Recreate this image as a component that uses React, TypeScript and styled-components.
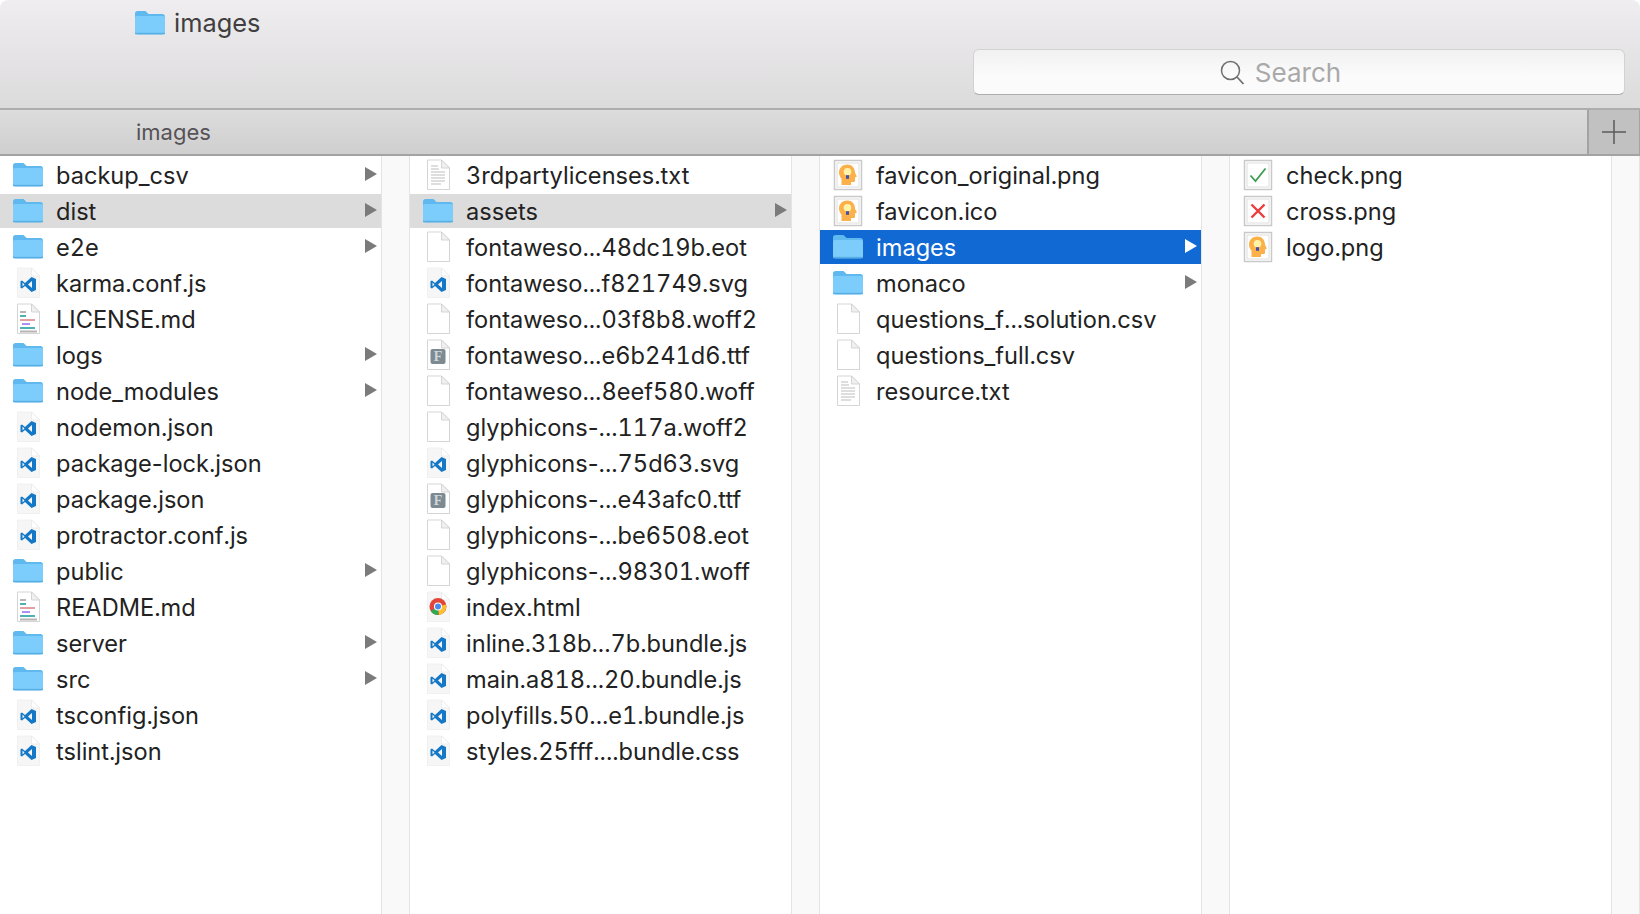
import React from 'react';
import styled, { createGlobalStyle } from 'styled-components';

type Kind = 'folder' | 'blank' | 'text' | 'md' | 'code' | 'font' | 'chrome' | 'logo' | 'check' | 'cross';

type Entry = {
  name: string;
  kind: Kind;
  state?: 'active' | 'path';
};

const GlobalStyle = createGlobalStyle`
  html, body {
    margin: 0;
    height: 100%;
    background: #fff;
    overflow: hidden;
  }
  #root {
    height: 100%;
  }
`;

const Window = styled.div`
  display: flex;
  flex-direction: column;
  height: 914px;
  font-family: Inter, Roboto, 'Liberation Sans', sans-serif;
  color: #222;
  overflow: hidden;
`;

const TitleBar = styled.header`
  height: 108px;
  box-sizing: border-box;
  padding: 9px 15px 13px 134px;
  display: flex;
  flex-direction: column;
  justify-content: space-between;
  background: linear-gradient(#efedef, #dcdbdc);
  border-radius: 8px 8px 0 0;
`;

const Title = styled.div`
  display: flex;
  align-items: center;
  gap: 8px;
  height: 26px;
  font-size: 25.400px;
  color: #403e40;
`;

const TitleIcon = styled.span`
  display: flex;
  margin-top: 2px;
`;

const SearchBox = styled.div`
  align-self: flex-end;
  width: 652px;
  height: 46px;
  box-sizing: border-box;
  display: flex;
  align-items: center;
  justify-content: center;
  gap: 10px;
  padding-right: 38px;
  font-size: 26px;
  color: #a9a9a9;
  background: linear-gradient(#f1f1f1, #fbfbfb 60%);
  border: 1px solid #d3d2d3;
  border-bottom-color: #aeadae;
  border-radius: 6px;
`;

const PathBar = styled.div`
  height: 48px;
  box-sizing: border-box;
  display: flex;
  align-items: center;
  justify-content: space-between;
  padding-left: 136px;
  font-size: 22px;
  color: #555355;
  background: linear-gradient(#dddcdd, #d0cfd0);
  border-top: 2px solid #aeadae;
  border-bottom: 2px solid #a4a3a4;
`;

const AddButton = styled.div`
  width: 53px;
  height: 100%;
  display: flex;
  align-items: center;
  justify-content: center;
  background: #c2c1c2;
  border-left: 2px solid #a4a3a4;
  border-right: 1px solid #a4a3a4;
  box-sizing: border-box;
`;

const Columns = styled.main`
  flex: 1;
  display: grid;
  grid-template-columns: repeat(4, 410px);
  background: #fff;
`;

const Column = styled.section`
  display: flex;
  min-width: 0;
`;

const List = styled.ul`
  flex: 1;
  list-style: none;
  margin: 0;
  padding: 2px 0 0;
  min-width: 0;
`;

const Gutter = styled.div`
  width: 27px;
  flex: none;
  background: #f9f9f9;
  border-left: 1px solid #e4e4e4;
  border-right: 1px solid #e4e4e4;
`;

const Row = styled.li<{ $state?: 'active' | 'path' }>`
  height: 34px;
  margin-bottom: 2px;
  display: flex;
  align-items: center;
  font-size: 23.600px;
  white-space: nowrap;
  background: ${(p) => (p.$state === 'active' ? '#1169d3' : p.$state === 'path' ? '#dcdcdc' : 'transparent')};
  color: ${(p) => (p.$state === 'active' ? '#fff' : '#222')};
`;

const IconSlot = styled.span`
  width: 56px;
  height: 34px;
  flex: none;
  display: flex;
  align-items: center;
  justify-content: center;
`;

const Name = styled.span`
  flex: 1;
  min-width: 0;
  font-variant-numeric: tabular-nums;
`;

// tabular figures also widen the hyphen in Inter
const Hyphen = styled.span`
  font-variant-numeric: normal;
`;

const Arrow = styled.span<{ $light: boolean }>`
  flex: none;
  width: 0;
  height: 0;
  margin: 0 4px 2px 0;
  border-top: 7px solid transparent;
  border-bottom: 7px solid transparent;
  border-left: 12px solid ${(p) => (p.$light ? '#fff' : '#7b7b7b')};
`;

const FolderIcon = () => (
  <svg width="32" height="26" viewBox="0 0 32 26">
    <path d="M1 3.500C1 2 2 1 3.500 1h7c1 0 1.600.4 2.300 1.200L14.500 4H28.500C30 4 31 5 31 6.500V22c0 1.500-1 2.500-2.500 2.500h-25C2 24.500 1 23.500 1 22Z" fill="#5fb9ee" />
    <path d="M1 7.500C1 6.500 2 6 3 6h25.500c1.500 0 2.500.5 2.500 1.500V22c0 1.500-1 2-2.500 2h-25C2 24 1 23.500 1 22Z" fill="#7ccdfb" />
    <rect x="1" y="22.800" width="30" height="1.400" fill="#58aee3" />
  </svg>
);

const Sheet = ({ children, faint }: { children?: React.ReactNode; faint?: boolean }) => (
  <svg width="26" height="32" viewBox="0 0 26 32">
    <path d="M2.500 1H16.500L24.500 9V30.500H2.500Z" fill={faint ? '#f6f6f6' : '#fff'} stroke={faint ? '#f0f0f0' : '#d5d5d5'} />
    <path d="M16.500 1V9H24.500Z" fill={faint ? '#fff' : '#f0f0f0'} stroke={faint ? '#ececec' : '#d5d5d5'} />
    {children}
  </svg>
);

const CodeMark = () => (
  <path
    fillRule="evenodd"
    d="M16.500 10 21 12V23L16.500 25 10 19 7 21.500 5.500 20.700V14.300L7 13.500 10 16ZM17 14 13 17.500 17 21ZM7.500 15.500V19.500L9.500 17.500Z"
    fill="#1478c6"
  />
);

const FontGlyph = styled.text`
  font-family: 'Liberation Serif', serif;
  font-size: 14px;
  font-weight: 700;
  fill: #cfd6da;
`;

const Thumb = ({ children }: { children: React.ReactNode }) => (
  <svg width="30" height="32" viewBox="0 0 30 32">
    <rect x="1.500" y="1.500" width="27" height="29" fill="#fff" stroke="#c9c9c9" strokeWidth="1.500" />
    <rect x="4" y="4" width="22" height="24" fill="#fff" stroke="#dedede" />
    {children}
  </svg>
);

const BulbMark = () => (
  <g>
    <path d="M14.500 5.500c-5 0-8.500 3.400-8.500 8 0 2.800 1.300 4.700 2.500 6.200V26h9.500v-3h2.400c1 0 1.600-.6 1.600-1.600v-3l1.900-.8-1.800-3.600C21.900 8.800 18.800 5.500 14.500 5.500Z" fill="#fbb04a" />
    <circle cx="14.500" cy="12.800" r="3.800" fill="#fff3a8" />
    <rect x="13" y="16.200" width="3" height="3.600" fill="#3f51a8" />
  </g>
);

const FileIcon = ({ kind }: { kind: Kind }) => {
  switch (kind) {
    case 'folder':
      return <FolderIcon />;
    case 'blank':
      return <Sheet />;
    case 'text':
      return (
        <Sheet>
          <path d="M6 7h7M6 10h8M6 13h14M6 16h14M6 19h14M6 22h14M6 25h10" stroke="#bdbdbd" strokeWidth="1" />
        </Sheet>
      );
    case 'md':
      return (
        <Sheet>
          <rect x="5" y="8" width="6" height="2" fill="#b5b5b5" />
          <rect x="5" y="12" width="6" height="2" fill="#4fb0b5" />
          <rect x="5" y="16" width="15" height="2" fill="#e0a0a4" />
          <rect x="7" y="20" width="8" height="2" fill="#ae8ff2" />
          <rect x="5" y="24" width="15" height="2" fill="#4fb0b5" />
          <rect x="5" y="27.500" width="17" height="2" fill="#b5b5b5" />
        </Sheet>
      );
    case 'code':
      return (
        <Sheet faint>
          <CodeMark />
        </Sheet>
      );
    case 'font':
      return (
        <Sheet>
          <rect x="5.500" y="10" width="15" height="15" rx="2" fill="#7d8a92" />
          <FontGlyph x="13" y="22" textAnchor="middle">
            F
          </FontGlyph>
        </Sheet>
      );
    case 'chrome':
      return (
        <Sheet faint>
          <circle cx="13" cy="15.500" r="8.500" fill="#e2463a" />
          <path d="M13 15.500 5.700 20a8.500 8.500 0 0 0 8 4Z" fill="#33a852" />
          <path d="M13 15.500l8-2a8.500 8.500 0 0 1-7 10.500Z" fill="#fbc02d" />
          <circle cx="13" cy="15.500" r="4" fill="#fff" />
          <circle cx="13" cy="15.500" r="3" fill="#4a8af0" />
        </Sheet>
      );
    case 'logo':
      return (
        <Thumb>
          <BulbMark />
        </Thumb>
      );
    case 'check':
      return (
        <Thumb>
          <path d="M7.500 16.500 12.500 22 22.500 9.500" fill="none" stroke="#3e9e54" strokeWidth="1.800" />
        </Thumb>
      );
    case 'cross':
      return (
        <Thumb>
          <path d="M8.500 9.500 21.500 22.500M21.500 9.500 8.500 22.500" fill="none" stroke="#ee3b3b" strokeWidth="2.400" />
        </Thumb>
      );
  }
};

const columns: Entry[][] = [
  [
    { name: 'backup_csv', kind: 'folder' },
    { name: 'dist', kind: 'folder', state: 'path' },
    { name: 'e2e', kind: 'folder' },
    { name: 'karma.conf.js', kind: 'code' },
    { name: 'LICENSE.md', kind: 'md' },
    { name: 'logs', kind: 'folder' },
    { name: 'node_modules', kind: 'folder' },
    { name: 'nodemon.json', kind: 'code' },
    { name: 'package-lock.json', kind: 'code' },
    { name: 'package.json', kind: 'code' },
    { name: 'protractor.conf.js', kind: 'code' },
    { name: 'public', kind: 'folder' },
    { name: 'README.md', kind: 'md' },
    { name: 'server', kind: 'folder' },
    { name: 'src', kind: 'folder' },
    { name: 'tsconfig.json', kind: 'code' },
    { name: 'tslint.json', kind: 'code' },
  ],
  [
    { name: '3rdpartylicenses.txt', kind: 'text' },
    { name: 'assets', kind: 'folder', state: 'path' },
    { name: 'fontaweso...48dc19b.eot', kind: 'blank' },
    { name: 'fontaweso...f821749.svg', kind: 'code' },
    { name: 'fontaweso...03f8b8.woff2', kind: 'blank' },
    { name: 'fontaweso...e6b241d6.ttf', kind: 'font' },
    { name: 'fontaweso...8eef580.woff', kind: 'blank' },
    { name: 'glyphicons-...117a.woff2', kind: 'blank' },
    { name: 'glyphicons-...75d63.svg', kind: 'code' },
    { name: 'glyphicons-...e43afc0.ttf', kind: 'font' },
    { name: 'glyphicons-...be6508.eot', kind: 'blank' },
    { name: 'glyphicons-...98301.woff', kind: 'blank' },
    { name: 'index.html', kind: 'chrome' },
    { name: 'inline.318b...7b.bundle.js', kind: 'code' },
    { name: 'main.a818...20.bundle.js', kind: 'code' },
    { name: 'polyfills.50...e1.bundle.js', kind: 'code' },
    { name: 'styles.25fff....bundle.css', kind: 'code' },
  ],
  [
    { name: 'favicon_original.png', kind: 'logo' },
    { name: 'favicon.ico', kind: 'logo' },
    { name: 'images', kind: 'folder', state: 'active' },
    { name: 'monaco', kind: 'folder' },
    { name: 'questions_f...solution.csv', kind: 'blank' },
    { name: 'questions_full.csv', kind: 'blank' },
    { name: 'resource.txt', kind: 'text' },
  ],
  [
    { name: 'check.png', kind: 'check' },
    { name: 'cross.png', kind: 'cross' },
    { name: 'logo.png', kind: 'logo' },
  ],
];

const FileName = ({ name }: { name: string }) => {
  const [head, ...rest] = name.split('-');
  if (rest.length === 0) return <Name>{name}</Name>;
  return (
    <Name>
      {head}
      <Hyphen>-</Hyphen>
      {rest.join('-')}
    </Name>
  );
};

const App: React.FC = () => {
  return (
    <Window>
      <GlobalStyle />
      <TitleBar>
        <Title>
          <TitleIcon>
            <FolderIcon />
          </TitleIcon>
          images
        </Title>
        <SearchBox>
          <svg width="26" height="26" viewBox="0 0 26 26">
            <circle cx="11.500" cy="11.500" r="9" fill="none" stroke="#6f6f6f" strokeWidth="1.500" />
            <path d="M18 18l6.500 7" stroke="#6f6f6f" strokeWidth="1.800" />
          </svg>
          Search
        </SearchBox>
      </TitleBar>
      <PathBar>
        images
        <AddButton>
          <svg width="24" height="24" viewBox="0 0 24 24">
            <path d="M12 0v24M0 12h24" stroke="#5b5a5b" strokeWidth="1.500" />
          </svg>
        </AddButton>
      </PathBar>
      <Columns>
        {columns.map((entries, index) => (
          <Column key={index}>
            <List>
              {entries.map((entry) => (
                <Row key={entry.name} $state={entry.state}>
                  <IconSlot>
                    <FileIcon kind={entry.kind} />
                  </IconSlot>
                  <FileName name={entry.name} />
                  {entry.kind === 'folder' && <Arrow $light={entry.state === 'active'} />}
                </Row>
              ))}
            </List>
            <Gutter />
          </Column>
        ))}
      </Columns>
    </Window>
  );
};

export default App;
